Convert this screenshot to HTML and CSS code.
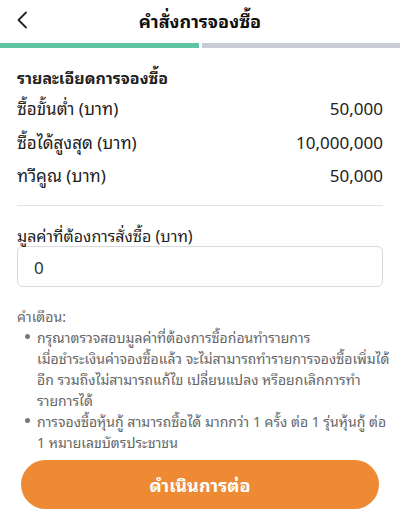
FILE: index.html
```html
<!DOCTYPE html>
<html lang="th">
<head>
<meta charset="utf-8">
<title>คำสั่งการจองซื้อ</title>
<link rel="stylesheet" href="styles.css">
</head>
<body>
<div class="screen">
  <header class="topbar">
    <button class="back" aria-label="back">
      <svg width="12" height="18" viewBox="0 0 12 18"><path d="M10 1.5 L2.5 9 L10 16.5" fill="none" stroke="#222" stroke-width="1.8" stroke-linecap="round" stroke-linejoin="round"/></svg>
    </button>
    <h1 class="title">คำสั่งการจองซื้อ</h1>
  </header>
  <div class="progress">
    <div class="seg done"></div>
    <div class="seg todo"></div>
  </div>
  <main class="content">
    <h2 class="section-title">รายละเอียดการจองซื้อ</h2>
    <div class="row"><span>ซื้อขั้นต่ำ (บาท)</span><span>50,000</span></div>
    <div class="row"><span>ซื้อได้สูงสุด (บาท)</span><span>10,000,000</span></div>
    <div class="row"><span>ทวีคูณ (บาท)</span><span>50,000</span></div>
    <hr class="divider">
    <label class="field-label">มูลค่าที่ต้องการสั่งซื้อ (บาท)</label>
    <div class="input">0</div>
    <div class="warning">
      <div class="warning-title">คำเตือน:</div>
      <ul class="warning-list">
        <li>กรุณาตรวจสอบมูลค่าที่ต้องการซื้อก่อนทำรายการ<br>เมื่อชำระเงินค่าจองซื้อแล้ว จะไม่สามารถทำรายการจองซื้อเพิ่มได้<br>อีก รวมถึงไม่สามารถแก้ไข เปลี่ยนแปลง หรือยกเลิกการทำ<br>รายการได้</li>
        <li>การจองซื้อหุ้นกู้ สามารถซื้อได้ มากกว่า 1 ครั้ง ต่อ 1 รุ่นหุ้นกู้ ต่อ<br>1 หมายเลขบัตรประชาชน</li>
      </ul>
    </div>
    <button class="cta">ดำเนินการต่อ</button>
  </main>
</div>
</body>
</html>
```

FILE: styles.css
```css
* { box-sizing: border-box; }
html, body { margin: 0; padding: 0; background: #fff; }
body {
  font-family: "Noto Sans Thai Looped", "Noto Looped Thai", "Sarabun", "Loma", "Garuda", "Noto Sans Thai", "Noto Sans", "Liberation Sans", sans-serif;
  color: #1f1f1f;
  width: 400px;
  height: 520px;
  overflow: hidden;
}
.screen { width: 400px; }
.topbar {
  height: 43px;
  display: flex;
  align-items: center;
  justify-content: center;
  position: relative;
}
.back {
  position: absolute;
  left: 12px;
  top: 11px;
  border: 0;
  background: none;
  padding: 0 4px;
  display: flex;
}
.title {
  margin: 0;
  font-size: 18px;
  font-weight: 700;
  color: #111;
  line-height: 24px;
  margin-top: -3px;
}
.progress {
  display: flex;
  gap: 3px;
  height: 5px;
}
.seg { height: 5px; }
.seg.done { width: 199px; background: #5ec4a2; }
.seg.todo { flex: 1; background: #c9cbd6; }
.content { padding: 17px 17px 0; }
.section-title {
  margin: 0;
  font-size: 16px;
  font-weight: 700;
  line-height: 24px;
  color: #222;
}
.row {
  display: flex;
  justify-content: space-between;
  align-items: center;
  height: 33.5px;
  font-size: 17px;
  color: #222;
}
.row:first-of-type { margin-top: 2px; }
.divider {
  border: 0;
  height: 1px;
  background: #e3e3e6;
  margin: 13px 0 19px;
}
.field-label {
  display: block;
  font-size: 16px;
  line-height: 20px;
  color: #222;
}
.input {
  margin-top: 1px;
  height: 41px;
  border: 1px solid #d9d9de;
  border-radius: 6px;
  padding: 0 16px;
  display: flex;
  align-items: center;
  font-size: 17px;
  color: #333;
}
.warning {
  margin-top: 18px;
  font-size: 14px;
  line-height: 21px;
  color: #666;
}
.warning-title { line-height: 21px; }
.warning-list {
  margin: 0;
  padding: 0 0 0 20px;
  list-style: none;
}
.warning-list li { position: relative; white-space: nowrap; }
.warning-list li::before {
  content: "";
  position: absolute;
  left: -12px;
  top: 8px;
  width: 5px;
  height: 5px;
  border-radius: 50%;
  background: #777;
}
.cta {
  display: flex;
  align-items: center;
  justify-content: center;
  margin: 8px 3px 0 4px;
  width: 358px;
  height: 49px;
  border: 0;
  border-radius: 25px;
  background: #ee8a33;
  color: #fff;
  font-family: inherit;
  font-size: 18px;
  font-weight: 700;
}
```
